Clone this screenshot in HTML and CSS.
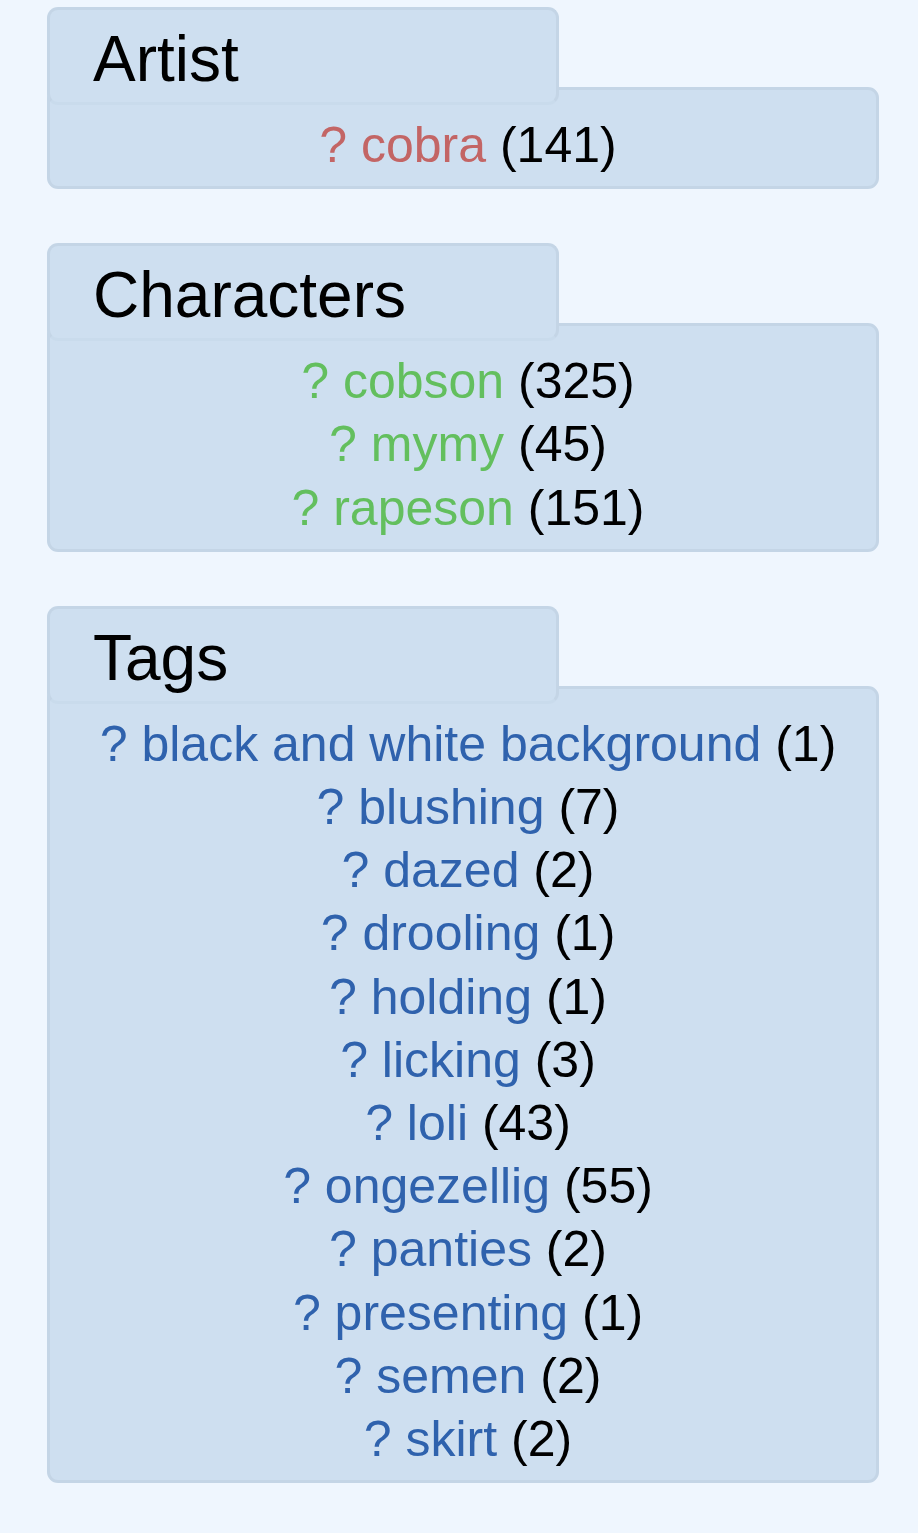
FILE: index.html
```
<!DOCTYPE html>
<html lang="en">
<head>
  <meta charset="UTF-8" />
  <title>Tags</title>
  <meta name="viewport" content="width=device-width, initial-scale=1.0" />
  <link rel="stylesheet" href="styles.css">
</head>
<body>

  <div class="sidebar">
    <div class="block">
      <h2 class="tab">Artist</h2>
      <ul class="tag-list">
        <li><a class="tag artist" href="#">? cobra</a> (141)</li>
      </ul>
    </div>

    <div class="block">
      <h2 class="tab">Characters</h2>
      <ul class="tag-list">
        <li><a class="tag character" href="#">? cobson</a> (325)</li>
        <li><a class="tag character" href="#">? mymy</a> (45)</li>
        <li><a class="tag character" href="#">? rapeson</a> (151)</li>
      </ul>
    </div>

    <div class="block">
      <h2 class="tab">Tags</h2>
      <ul class="tag-list">
        <li><a class="tag general" href="#">? black and white background</a> (1)</li>
        <li><a class="tag general" href="#">? blushing</a> (7)</li>
        <li><a class="tag general" href="#">? dazed</a> (2)</li>
        <li><a class="tag general" href="#">? drooling</a> (1)</li>
        <li><a class="tag general" href="#">? holding</a> (1)</li>
        <li><a class="tag general" href="#">? licking</a> (3)</li>
        <li><a class="tag general" href="#">? loli</a> (43)</li>
        <li><a class="tag general" href="#">? ongezellig</a> (55)</li>
        <li><a class="tag general" href="#">? panties</a> (2)</li>
        <li><a class="tag general" href="#">? presenting</a> (1)</li>
        <li><a class="tag general" href="#">? semen</a> (2)</li>
        <li><a class="tag general" href="#">? skirt</a> (2)</li>
      </ul>
    </div>
  </div>

</body>
</html>
```

FILE: styles.css
```
body {
  font-family: 'Liberation Sans', Arial, sans-serif;
  background: #eff6fe;
  margin: 0;
  padding: 7px 39px 0 47px;
  color: #000;
}

.sidebar {
  display: flex;
  flex-direction: column;
  gap: 54px;
}

.block {
  display: flex;
  flex-direction: column;
}

.tab {
  position: relative;
  z-index: 1;
  width: 512px;
  height: 98px;
  box-sizing: border-box;
  margin: 0 0 -18px 0;
  padding: 17px 0 0 43px;
  background: #cedff0;
  border: 3px solid #c4d5e6;
  border-bottom-color: #c9dbec;
  border-radius: 11px;
  font-size: 64px;
  font-weight: normal;
  line-height: 64px;
}

.tag-list {
  list-style: none;
  margin: 0;
  padding: 24px 0 9px 10px;
  background: #cedff0;
  border: 3px solid #c4d5e6;
  border-radius: 11px;
  text-align: center;
  font-size: 50px;
  line-height: 63.2px;
}

.tag {
  text-decoration: none;
}

.tag.artist {
  color: #c36565;
}

.tag.character {
  color: #63bf5e;
}

.tag.general {
  color: #2f62ad;
}
```
